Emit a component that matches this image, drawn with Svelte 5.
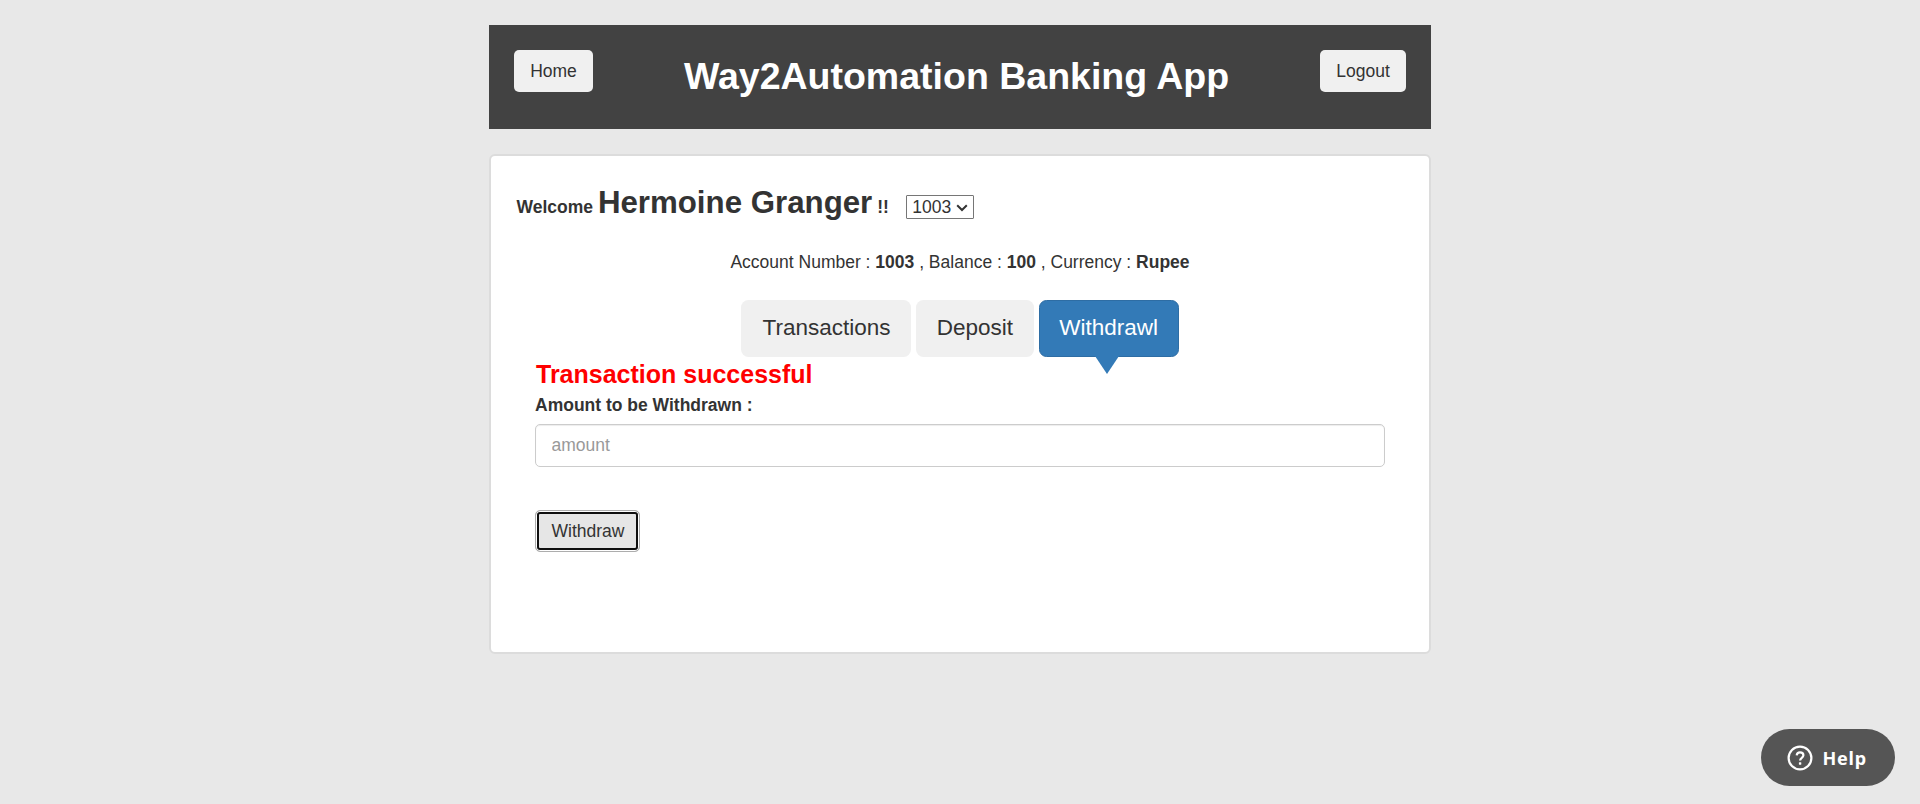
<script>
  const customer = 'Hermoine Granger';
  const accounts = ['1003', '1004', '1005'];
  let account = $state('1003');
  let amount = $state('');
  let active = $state('Withdrawl');
  const tabs = ['Transactions', 'Deposit', 'Withdrawl'];
</script>

<main class="page">
  <header class="bar">
    <button class="btn home">Home</button>
    <h1>Way2Automation Banking App</h1>
    <button class="btn logout">Logout</button>
  </header>

  <section class="card">
    <div class="welcome">
      <strong>Welcome <span class="name">{customer}</span> !!</strong>
      <span class="picker">
        <select bind:value={account} aria-label="Account">
          {#each accounts as id}<option value={id}>{id}</option>{/each}
        </select>
        <svg class="chevron" viewBox="0 0 12 8"><path d="M1.2 1.3 6 6l4.8-4.7" /></svg>
      </span>
    </div>

    <p class="summary">
      Account Number : <strong>{account}</strong> , Balance : <strong>100</strong> , Currency : <strong>Rupee</strong>
    </p>

    <nav class="tabs">
      {#each tabs as tab}
        <button class="tab" class:active={active === tab} onclick={() => (active = tab)}>{tab}</button>
      {/each}
    </nav>

    <div class="form">
      <div class="message">Transaction successful</div>
      <label for="amount">Amount to be Withdrawn :</label>
      <input id="amount" placeholder="amount" bind:value={amount} />
      <button class="submit">Withdraw</button>
    </div>
  </section>
</main>

<button class="help">
  <svg viewBox="0 0 26 26" class="help-icon">
    <circle cx="13" cy="13" r="11.4" />
    <path d="M9.7 10.4c.2-2 1.5-3 3.3-3 2 0 3.4 1.2 3.4 2.9 0 2.6-3.3 2.5-3.3 5.200" />
    <rect x="11.9" y="17.3" width="2.4" height="2.4" rx=".4" />
  </svg>
  <span>Help</span>
</button>

<style>
  :global(body) {
    background: #e8e8e8;
    overflow: hidden;
  }
  .page,
  .page button,
  .page input,
  .page select {
    font-family: 'Liberation Sans', Arial, sans-serif;
    font-size: 17.5px;
    line-height: 25px;
    color: #333;
    box-sizing: border-box;
  }
  .page {
    width: 942px;
    margin: 0 auto;
    padding-top: 25px;
  }
  .bar {
    display: flex;
    align-items: flex-start;
    justify-content: space-between;
    height: 104px;
    padding: 25px;
    background: #424242;
    box-sizing: border-box;
  }
  h1 {
    margin: 5px 0 0;
    font-size: 37.5px;
    line-height: 42px;
    color: #fff;
    white-space: nowrap;
  }
  .btn {
    height: 42px;
    padding: 0;
    border: 0;
    border-radius: 5px;
    background: #f0f0f0;
  }
  .page .home {
    width: 79px;
  }
  .page .logout {
    width: 86px;
  }
  .card {
    height: 500px;
    margin-top: 25px;
    padding: 25px 25px 0;
    background: #fff;
    border: 2px solid #dcdcdc;
    border-radius: 6px;
    box-sizing: border-box;
  }
  .welcome {
    display: flex;
    align-items: baseline;
    height: 44px;
    padding-left: 0.5px;
  }
  .name {
    font-size: 31.25px;
    line-height: 44px;
  }
  .picker {
    position: relative;
    margin-left: 17.5px;
  }
  .picker select {
    width: 68px;
    height: 24px;
    padding: 0 0 0 5px;
    line-height: 20px;
    background: #fff;
    border: 1px solid #767676;
    border-radius: 1px;
    appearance: none;
  }
  .chevron {
    position: absolute;
    right: 6px;
    top: 9px;
    width: 12px;
    height: 8px;
    fill: none;
    stroke: #333;
    stroke-width: 2;
    pointer-events: none;
  }
  .summary {
    margin: 25px 0 0;
    text-align: center;
  }
  .tabs {
    display: flex;
    justify-content: center;
    gap: 4.3px;
    margin-top: 25px;
  }
  .page .tab {
    position: relative;
    height: 57px;
    padding: 0 20px 1px;
    border: 1px solid transparent;
    border-radius: 7.5px;
    background: #f0f0f0;
    background-clip: border-box;
    font-size: 22.5px;
    line-height: 30px;
  }
  .page .tab.active {
    margin-left: 0.4px;
    padding: 0 19.5px 1px;
    color: #fff;
    background: #337ab7;
    border-color: #2e6da4;
  }
  .tab.active::after {
    content: '';
    position: absolute;
    top: 55px;
    left: 55.5px;
    border: 12px solid transparent;
    border-top: 18px solid #337ab7;
    border-bottom: 0;
  }
  .form {
    display: flex;
    flex-direction: column;
    align-items: flex-start;
    padding: 0 19px;
  }
  .message {
    margin: 2px 0 0 1px;
    font-size: 25px;
    font-weight: bold;
    line-height: 30px;
    color: #f00;
  }
  label {
    margin-top: 4px;
    font-weight: bold;
  }
  .page input {
    width: 850px;
    height: 43px;
    margin-top: 6px;
    padding: 0 15.5px;
    border: 1px solid #ccc;
    border-radius: 5px;
    background: #fff;
    box-shadow: inset 0 1px 1px rgba(0, 0, 0, 0.075);
    outline: 0;
  }
  .page input::placeholder {
    color: #999;
    opacity: 1;
  }
  .page .submit {
    width: 105px;
    height: 42px;
    margin-top: 43px;
    padding: 0 0 0 1px;
    background: #e6e6e6;
    border: 1px solid #adadad;
    border-radius: 5px;
    box-shadow: inset 0 0 0 1px #fff, inset 0 0 0 3px #101010;
    outline: 0;
  }
  .help {
    position: fixed;
    right: 25px;
    bottom: 18px;
    display: flex;
    align-items: center;
    width: 134px;
    height: 57px;
    padding: 0 0 0 26px;
    border: 0;
    border-radius: 28.5px;
    background: #555;
    color: #fff;
    font: bold 18px 'Noto Sans', sans-serif;
    letter-spacing: 0.75px;
  }
  .help-icon {
    width: 26px;
    height: 26px;
    margin-right: 9.5px;
    fill: none;
    stroke: #fff;
    stroke-width: 2.2;
  }
  .help-icon rect {
    fill: #fff;
    stroke: none;
  }
</style>
